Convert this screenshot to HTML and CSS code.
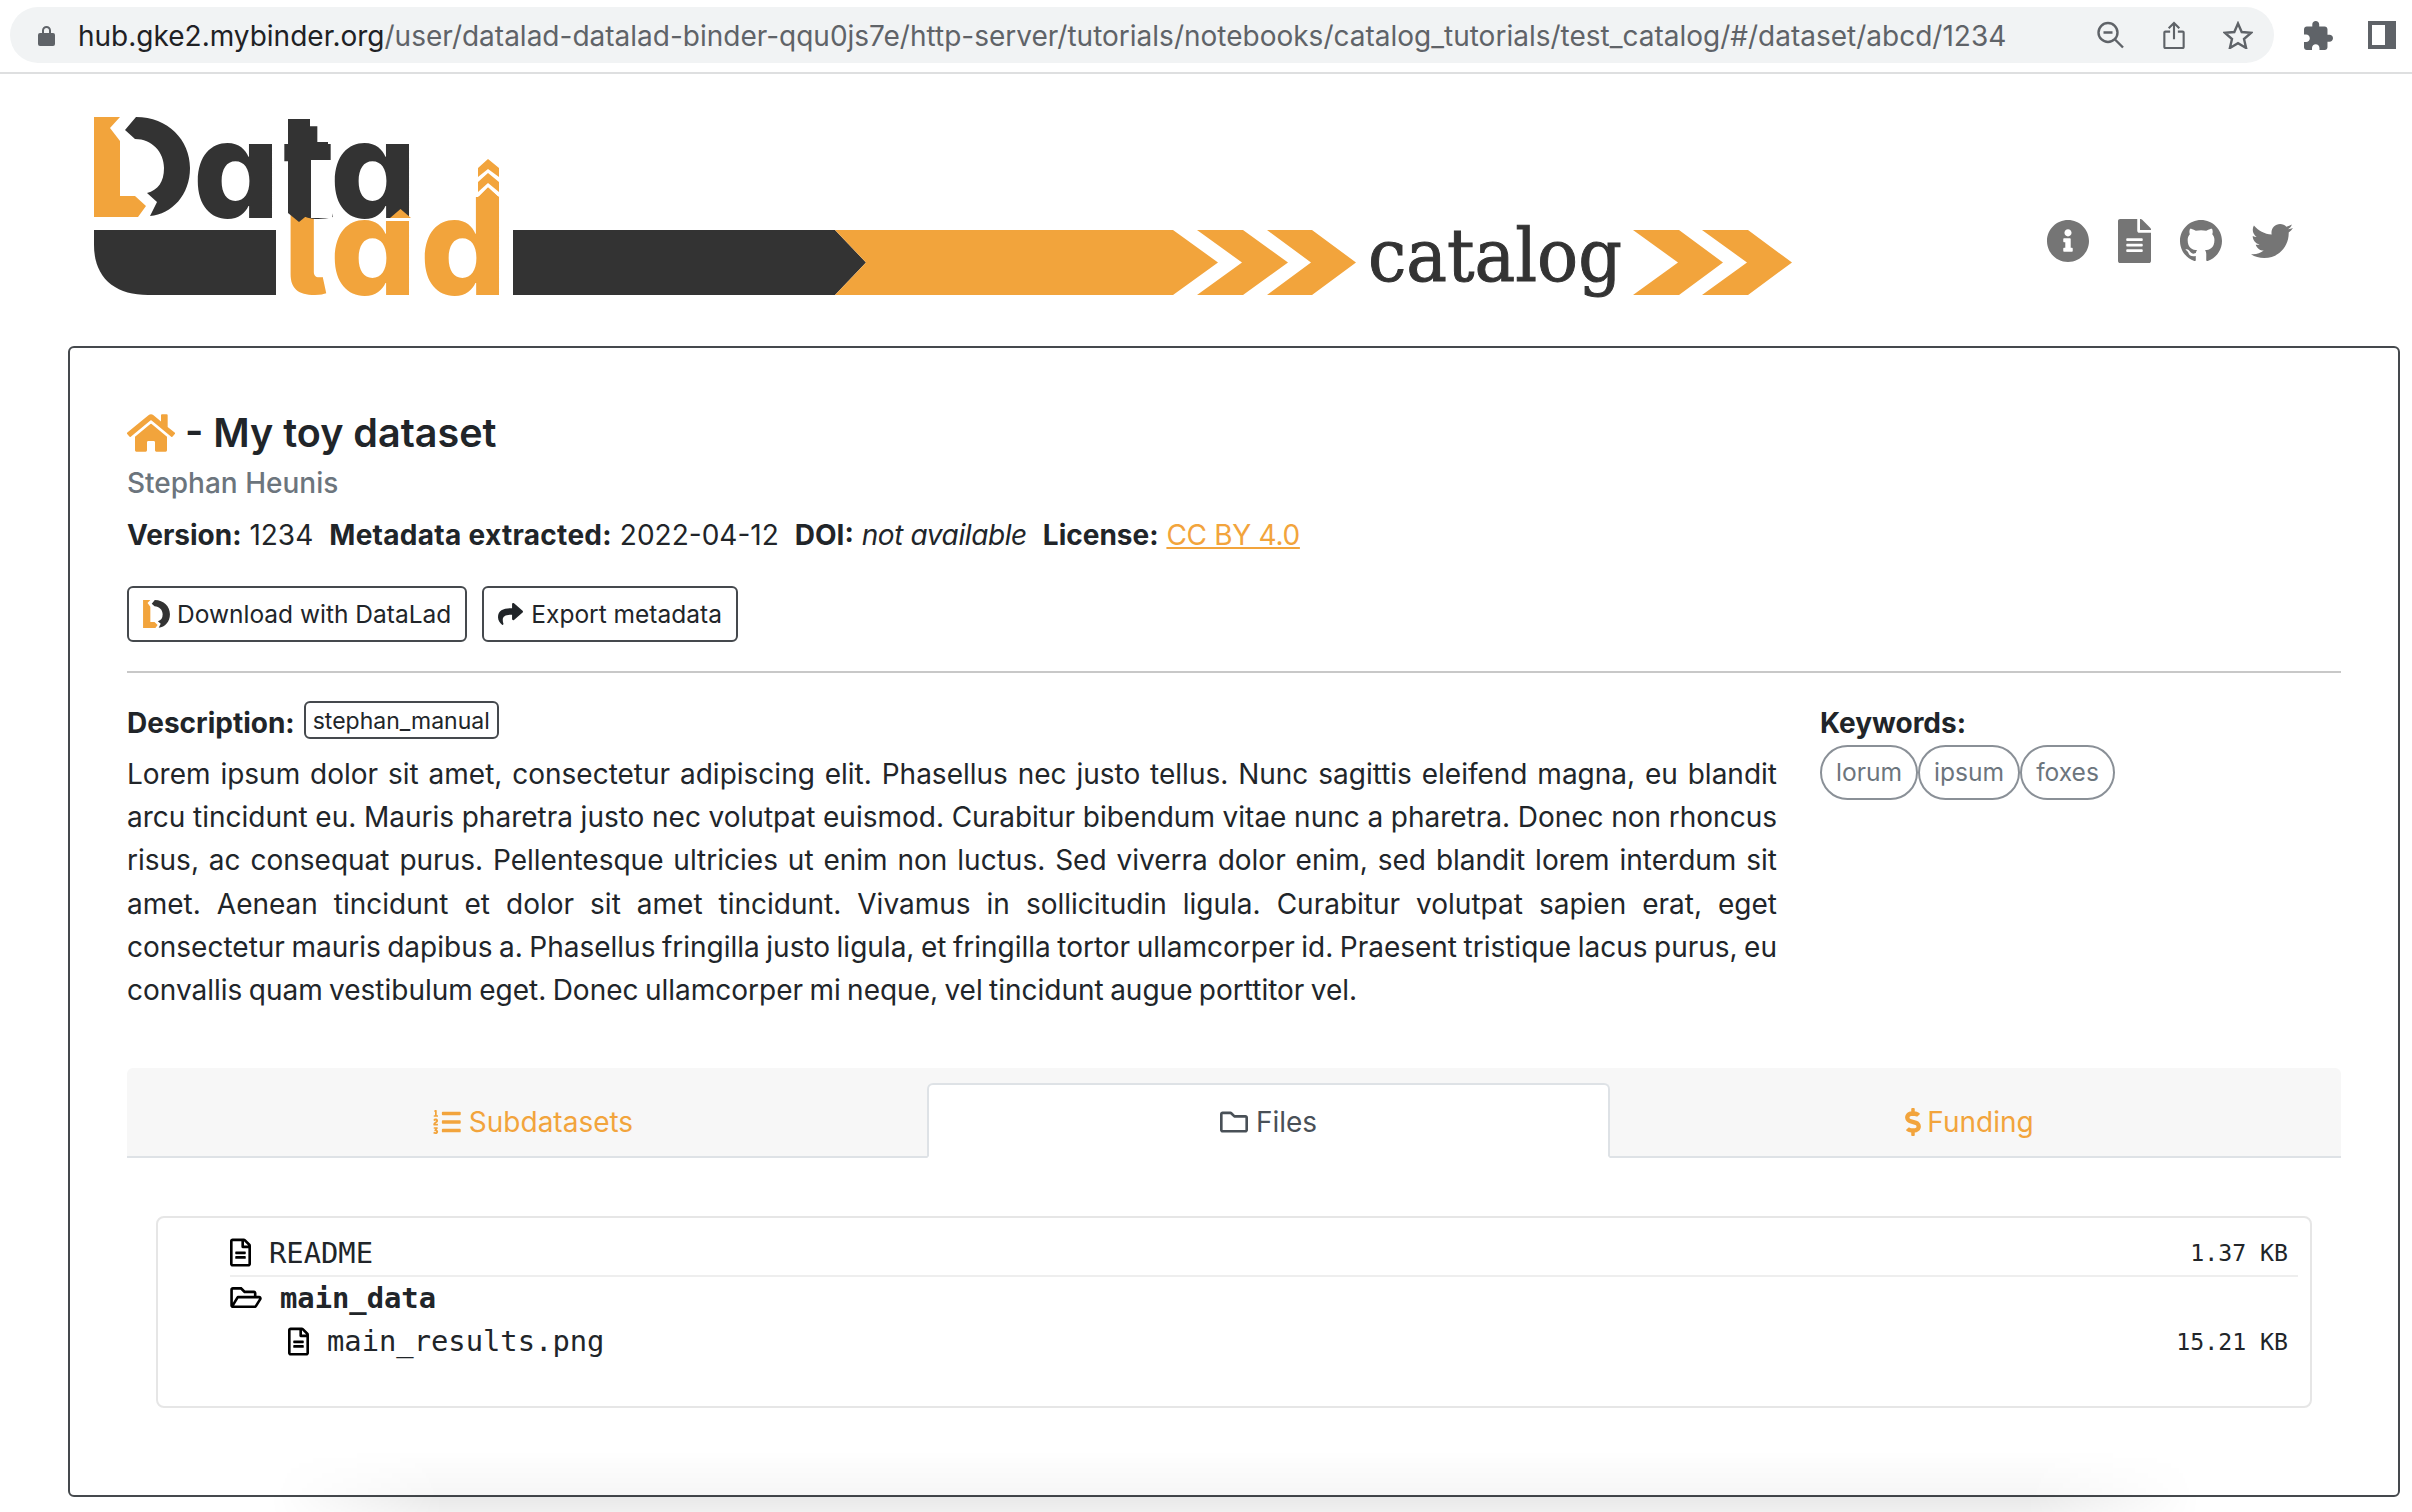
FILE: index.html
```html
<!DOCTYPE html>
<html lang="en">
<head>
    <meta charset="UTF-8">
    <meta name="viewport" content="width=device-width, initial-scale=1.0">
    <title>DataLad Catalog - My toy dataset</title>
    <link rel="stylesheet" href="styles.css">
</head>
<body>
    <svg class="defs" width="0" height="0">
        <symbol id="dl-mark" viewBox="94 117 96 100">
            <polygon fill="#f2a43c" points="94,117 120,117 110,128 120,141 120,196 135,196 146,206 138,217 94,217"/>
            <path fill="#333" d="M136 117C168 117 190 140 190 168C190 195 172 214 150 216L157 202L147 193C158 190 164 182 164 168C164 152 152 139 135 139L125 130Z"/>
        </symbol>
    </svg>

    <div class="browser-bar">
        <div class="address">
            <svg class="lock" viewBox="0 0 17 21"><path fill="#5f6368" d="M4 8V5.5a4.5 4.5 0 0 1 9 0V8h2a2 2 0 0 1 2 2v9a2 2 0 0 1-2 2H2a2 2 0 0 1-2-2v-9a2 2 0 0 1 2-2zm2 0h5V5.5a2.5 2.5 0 0 0-5 0z"/></svg>
            <div class="url"><span class="host">hub.gke2.mybinder.org</span>/user/datalad-datalad-binder-qqu0js7e/http-server/tutorials/notebooks/catalog_tutorials/test_catalog/#/dataset/abcd/1234</div>
            <svg class="bar-icon zoom-icon" viewBox="0 0 27 27"><circle cx="11" cy="11" r="9.5" fill="none" stroke="#5f6368" stroke-width="2.4"/><path d="M6.5 11h9M18 18l8 8" fill="none" stroke="#5f6368" stroke-width="2.4"/></svg>
            <svg class="bar-icon share-icon" viewBox="0 0 22 29"><path d="M7 11H2a1 1 0 0 0-1 1v15a1 1 0 0 0 1 1h18a1 1 0 0 0 1-1V12a1 1 0 0 0-1-1h-5M11 19V2M5.5 7.5L11 2l5.500 5.500" fill="none" stroke="#5f6368" stroke-width="2.2"/></svg>
            <svg class="bar-icon star-icon" viewBox="0 0 30 28"><polygon points="15,2.500 18.700,11 28,11.800 21,18 23.100,27 15,22.200 6.900,27 9,18 2,11.800 11.300,11" fill="none" stroke="#5f6368" stroke-width="2.4"/></svg>
        </div>
        <svg class="puzzle" viewBox="2 1 21 21"><path fill="#5f6368" d="M20.500 11H19V7c0-1.100-.9-2-2-2h-4V3.500C13 2.120 11.880 1 10.500 1S8 2.120 8 3.500V5H4c-1.100 0-1.990.9-1.990 2v3.800H3.500c1.490 0 2.700 1.210 2.700 2.700s-1.210 2.700-2.700 2.700H2V20c0 1.100.9 2 2 2h3.800v-1.500c0-1.490 1.210-2.700 2.700-2.700 1.490 0 2.700 1.210 2.700 2.700V22H17c1.100 0 2-.9 2-2v-4h1.500c1.380 0 2.500-1.120 2.500-2.500S21.880 11 20.500 11z"/></svg>
        <svg class="side-panel" viewBox="0 0 28 28"><path fill="#5f6368" fill-rule="evenodd" d="M0 0h28v28H0zM4 4v20h13V4z"/></svg>
    </div>

    <header class="site-header">
        <svg class="logo" viewBox="94 117 1698 178" role="img" aria-label="DataLad catalog">
            <text class="logo-word lad" x="283 330 420">lad</text>
            <polygon fill="#f2a43c" points="478,197 488,187 499,197 499,230 478,230"/>
            <polygon fill="#fff" points="470,180 488,180 488,187 478,197 470,197"/>
            <polygon fill="#fff" points="488,180 505,180 505,197 499,197 488,187"/>
            <polygon fill="#f2a43c" points="488,159 499,168 499,177 488,169 478,177 478,168"/>
            <polygon fill="#f2a43c" points="488,173 499,182 499,192 488,183 478,192 478,182"/>
            <use href="#dl-mark" x="94" y="117" width="96" height="100"/>
            <rect fill="#fff" x="280" y="160" width="52" height="53"/>
            <text class="logo-word ata" x="193 283 330">ata</text>
            <rect fill="#fff" x="311" y="160" width="21" height="58"/>
            <rect fill="#333" x="288" y="119" width="22" height="94"/>
            <polygon fill="#333" points="288,213 310,213 299,222"/>
            <rect fill="#333" x="310" y="142" width="18" height="16"/>
            <polygon fill="#f2a43c" points="390,218 400.500,209 411,218"/>
            <path fill="#333" d="M94 230H276V295H148C115 295 94 278 94 245Z"/>
            <polygon fill="#333" points="513,230 835,230 866,262.500 835,295 513,295"/>
            <polygon fill="#f2a43c" points="835,230 1173,230 1218,262.500 1173,295 835,295 866,262.500"/>
            <polygon fill="#f2a43c" points="1197,230 1243,230 1288,262.500 1243,295 1197,295 1242,262.500"/>
            <polygon fill="#f2a43c" points="1267,230 1312,230 1356,262.500 1312,295 1267,295 1311,262.500"/>
            <text class="logo-catalog" x="1368" y="281" textLength="254" lengthAdjust="spacingAndGlyphs">catalog</text>
            <polygon fill="#f2a43c" points="1633,230 1679,230 1723,262.500 1679,295 1633,295 1678,262.500"/>
            <polygon fill="#f2a43c" points="1702,230 1748,230 1792,262.500 1748,295 1702,295 1747,262.500"/>
        </svg>
        <nav class="social">
            <svg class="social-icon" viewBox="8 8 496 496"><path d="M256 8C119 8 8 119.083 8 256c0 137 111 248 248 248s248-111 248-248C504 119.083 393 8 256 8zm0 110c23.196 0 42 18.804 42 42s-18.804 42-42 42-42-18.804-42-42 18.804-42 42-42zm56 254c0 6.627-5.373 12-12 12h-88c-6.627 0-12-5.373-12-12v-24c0-6.627 5.373-12 12-12h12v-64h-12c-6.627 0-12-5.373-12-12v-24c0-6.627 5.373-12 12-12h64c6.627 0 12 5.373 12 12v100h12c6.627 0 12 5.373 12 12v24z"/></svg>
            <svg class="social-icon doc" viewBox="0 0 384 512"><path d="M224 136V0H24C10.700 0 0 10.700 0 24v464c0 13.300 10.700 24 24 24h336c13.300 0 24-10.700 24-24V160H248c-13.200 0-24-10.800-24-24zm64 236c0 6.600-5.400 12-12 12H108c-6.600 0-12-5.400-12-12v-8c0-6.600 5.400-12 12-12h168c6.600 0 12 5.400 12 12v8zm0-64c0 6.600-5.400 12-12 12H108c-6.600 0-12-5.400-12-12v-8c0-6.600 5.400-12 12-12h168c6.600 0 12 5.400 12 12v8zm0-72v8c0 6.600-5.400 12-12 12H108c-6.600 0-12-5.400-12-12v-8c0-6.600 5.400-12 12-12h168c6.600 0 12 5.400 12 12zm96-114.100v6.100H256V0h6.100c6.400 0 12.500 2.500 17 7l97.900 98c4.500 4.500 7 10.600 7 16.900z"/></svg>
            <svg class="social-icon" viewBox="0 0 16 16"><path d="M8 0C3.580 0 0 3.580 0 8c0 3.540 2.290 6.530 5.470 7.590.4.070.55-.17.55-.38 0-.19-.01-.82-.01-1.490-2.010.37-2.530-.49-2.690-.94-.09-.23-.48-.94-.82-1.130-.28-.15-.68-.52-.01-.53.63-.01 1.080.58 1.230.82.72 1.210 1.870.87 2.330.66.07-.52.28-.87.51-1.070-1.780-.2-3.640-.89-3.640-3.950 0-.87.31-1.590.82-2.150-.08-.2-.36-1.020.08-2.120 0 0 .67-.21 2.200.82.64-.18 1.320-.27 2-.27.68 0 1.360.09 2 .27 1.530-1.040 2.200-.82 2.200-.82.44 1.100.16 1.920.08 2.120.51.56.82 1.270.82 2.150 0 3.070-1.870 3.750-3.650 3.950.29.25.54.73.54 1.480 0 1.070-.01 1.930-.01 2.200 0 .21.15.46.55.38A8.013 8.013 0 0016 8c0-4.420-3.580-8-8-8z"/></svg>
            <svg class="social-icon" viewBox="0 48 512 416"><path d="M459.370 151.716c.325 4.548.325 9.097.325 13.645 0 138.720-105.583 298.558-298.558 298.558-59.452 0-114.680-17.219-161.137-47.106 8.447.974 16.568 1.299 25.340 1.299 49.055 0 94.213-16.568 130.274-44.832-46.132-.975-84.792-31.188-98.112-72.772 6.498.974 12.995 1.624 19.818 1.624 9.421 0 18.843-1.300 27.614-3.573-48.081-9.747-84.143-51.980-84.143-102.985v-1.299c13.969 7.797 30.214 12.670 47.431 13.319-28.264-18.843-46.781-51.005-46.781-87.391 0-19.492 5.197-37.360 14.294-52.954 51.655 63.675 129.300 105.258 216.365 109.807-1.624-7.797-2.599-15.918-2.599-24.040 0-57.828 46.782-104.934 104.934-104.934 30.213 0 57.502 12.670 76.670 33.137 23.715-4.548 46.456-13.320 66.599-25.340-7.798 24.366-24.366 44.833-46.132 57.827 21.117-2.273 41.584-8.122 60.426-16.243-14.292 20.791-32.161 39.308-52.628 54.253z"/></svg>
        </nav>
    </header>

    <main class="card">
        <h1 class="title">
            <svg class="home-icon" viewBox="0 32 576 448"><path d="M280.370 148.260L96 300.110V464a16 16 0 0 0 16 16l112.060-.29a16 16 0 0 0 15.920-16V368a16 16 0 0 1 16-16h64a16 16 0 0 1 16 16v95.640a16 16 0 0 0 16 16.050L464 480a16 16 0 0 0 16-16V300L295.670 148.260a12.190 12.190 0 0 0-15.300 0zM571.600 251.470L488 182.560V44.050a12 12 0 0 0-12-12h-56a12 12 0 0 0-12 12v72.610L318.470 43a48 48 0 0 0-61 0L4.340 251.470a12 12 0 0 0-1.600 16.900l25.500 31A12 12 0 0 0 45.150 301l235.220-193.740a12.190 12.190 0 0 1 15.300 0L530.900 301a12 12 0 0 0 16.900-1.600l25.500-31a12 12 0 0 0-1.700-16.930z"/></svg>
            <span>- My toy dataset</span>
        </h1>
        <div class="author">Stephan Heunis</div>
        <div class="meta">
            <span><b>Version:</b> 1234</span>
            <span><b class="wide">Metadata extracted:</b> 2022-04-12</span>
            <span><b>DOI:</b> <em>not available</em></span>
            <span><b>License:</b> <a href="#">CC BY 4.0</a></span>
        </div>
        <div class="actions">
            <button class="btn"><svg class="btn-mark"><use href="#dl-mark"/></svg>Download with DataLad</button>
            <button class="btn"><svg class="btn-share" viewBox="0 32 512 448"><path d="M503.691 189.836L327.687 37.851C312.281 24.546 288 35.347 288 56.015v80.053C127.371 137.907 0 170.100 0 322.326c0 61.441 39.581 122.309 83.333 154.132 13.653 9.931 33.111-2.533 28.077-18.631C66.066 312.814 132.917 274.316 288 272.085V360c0 20.700 24.300 31.453 39.687 18.164l176.004-152c11.071-9.562 11.086-26.753 0-36.328z"/></svg>Export metadata</button>
        </div>
        <hr class="rule">
        <section class="details">
            <div class="description">
                <div class="desc-head"><b>Description:</b><span class="source-tag">stephan_manual</span></div>
                <p>Lorem ipsum dolor sit amet, consectetur adipiscing elit. Phasellus nec justo tellus. Nunc sagittis eleifend magna, eu blandit arcu tincidunt eu. Mauris pharetra justo nec volutpat euismod. Curabitur bibendum vitae nunc a pharetra. Donec non rhoncus risus, ac consequat purus. Pellentesque ultricies ut enim non luctus. Sed viverra dolor enim, sed blandit lorem interdum sit amet. Aenean tincidunt et dolor sit amet tincidunt. Vivamus in sollicitudin ligula. Curabitur volutpat sapien erat, eget consectetur mauris dapibus a. Phasellus fringilla justo ligula, et fringilla tortor ullamcorper id. Praesent tristique lacus purus, eu convallis quam vestibulum eget. Donec ullamcorper mi neque, vel tincidunt augue porttitor vel.</p>
            </div>
            <aside class="keywords">
                <b>Keywords:</b>
                <div class="pills">
                    <span class="pill">lorum</span>
                    <span class="pill">ipsum</span>
                    <span class="pill">foxes</span>
                </div>
            </aside>
        </section>
        <div class="tabs">
            <a class="tab" href="#"><svg class="tab-icon" viewBox="0 32 512 448"><path d="M61.770 401l17.500-20.150a19.920 19.920 0 0 0 5.070-14.190v-3.310C84.340 356 80.500 352 73 352H16a8 8 0 0 0-8 8v16a8 8 0 0 0 8 8h22.830a157.410 157.410 0 0 0-11 12.310l-5.610 7c-4 5.070-5.250 10.130-2.800 14.880l1.050 1.930c3 5.760 6.290 7.880 12.250 7.880h4.730c10.330 0 15.940 2.440 15.940 9.090 0 4.720-4.200 8.220-14.360 8.220a41.540 41.540 0 0 1-15.470-3.120c-6.490-3.880-11.740-3.500-15.600 3.120l-5.590 9.310c-3.720 6.130-3.190 11.720 2.630 15.940 7.710 4.690 20.380 9.440 37 9.440 34.160 0 48.500-22.750 48.500-44.120-.03-14.380-9.120-29.760-28.730-34.880zM496 224H176a16 16 0 0 0-16 16v32a16 16 0 0 0 16 16h320a16 16 0 0 0 16-16v-32a16 16 0 0 0-16-16zm0-160H176a16 16 0 0 0-16 16v32a16 16 0 0 0 16 16h320a16 16 0 0 0 16-16V80a16 16 0 0 0-16-16zm0 320H176a16 16 0 0 0-16 16v32a16 16 0 0 0 16 16h320a16 16 0 0 0 16-16v-32a16 16 0 0 0-16-16zM16 160h64a8 8 0 0 0 8-8v-16a8 8 0 0 0-8-8H64V40a8 8 0 0 0-8-8H32a8 8 0 0 0-7.140 4.420l-8 16A8 8 0 0 0 24 64h8v64H16a8 8 0 0 0-8 8v16a8 8 0 0 0 8 8zm-3.910 160H80a8 8 0 0 0 8-8v-16a8 8 0 0 0-8-8H41.320c3.290-10.290 48.340-18.680 48.340-56.440 0-29.060-25-39.560-44.470-39.560-21.360 0-33.800 10-40.460 18.750-4.370 5.590-3 10.840 2.800 15.370l8.580 6.880c5.610 4.560 11 2.470 16.120-2.440a13.440 13.440 0 0 1 9.460-3.840c3.330 0 9.280 1.560 9.280 8.750C51 248.190 0 257.310 0 304.590v4C0 316 5.080 320 12.090 320z"/></svg>Subdatasets</a>
            <a class="tab active" href="#"><svg class="tab-icon" viewBox="0 64 512 384"><path d="M464 128H272l-54.630-54.630c-6-6-14.140-9.370-22.630-9.370H48C21.490 64 0 85.490 0 112v288c0 26.510 21.490 48 48 48h416c26.510 0 48-21.490 48-48V176c0-26.510-21.490-48-48-48zm0 272H48V112h140.120l54.630 54.630c6 6 14.140 9.370 22.630 9.370H464v224z"/></svg>Files</a>
            <a class="tab" href="#"><svg class="tab-icon dollar" viewBox="0 0 288 512"><path d="M209.200 233.400l-108-31.600C88.700 198.200 80 186.500 80 173.500c0-16.300 13.200-29.500 29.500-29.500h66.300c12.200 0 24.200 3.700 34.200 10.500 6.100 4.100 14.300 3.100 19.500-2l34.800-34c7.100-6.900 6.100-18.400-1.800-24.500C238 74.800 207.400 64.100 176 64V16c0-8.800-7.200-16-16-16h-32c-8.800 0-16 7.200-16 16v48h-2.500C45.800 64-5.400 118.700.5 183.600c4.200 46.100 39.400 83.600 83.800 96.600l102.500 30c12.500 3.700 21.200 15.300 21.200 28.300 0 16.300-13.200 29.500-29.500 29.500h-66.300C100 368 88 364.300 78 357.500c-6.100-4.100-14.300-3.100-19.500 2l-34.800 34c-7.100 6.900-6.100 18.400 1.800 24.500 24.500 19.200 55.100 29.900 86.500 30v48c0 8.800 7.200 16 16 16h32c8.800 0 16-7.200 16-16v-48.200c46.600-.9 90.300-28.600 105.700-72.700 21.500-61.600-14.600-124.800-72.500-141.700z"/></svg>Funding</a>
        </div>
        <div class="files">
            <div class="file-row first">
                <svg class="file-icon" viewBox="0 0 384 512"><path d="M288 248v28c0 6.600-5.400 12-12 12H108c-6.600 0-12-5.400-12-12v-28c0-6.600 5.400-12 12-12h168c6.600 0 12 5.400 12 12zm-12 72H108c-6.600 0-12 5.400-12 12v28c0 6.600 5.400 12 12 12h168c6.600 0 12-5.400 12-12v-28c0-6.600-5.400-12-12-12zm108-188.100V464c0 26.500-21.500 48-48 48H48c-26.500 0-48-21.500-48-48V48C0 21.500 21.500 0 48 0h204.100C264.800 0 277 5.100 286 14.100L369.900 98c9 8.900 14.100 21.200 14.100 33.900zm-128-80V128h76.100L256 51.900zM336 464V176H232c-13.300 0-24-10.700-24-24V48H48v416h288z"/></svg>
                <span class="file-name">README</span>
                <span class="file-size">1.37 KB</span>
            </div>
            <div class="file-row folder">
                <svg class="folder-icon" viewBox="0 64 576 384"><path d="M527.900 224H480v-48c0-26.500-21.500-48-48-48H272l-64-64H48C21.500 64 0 85.500 0 112v288c0 26.500 21.500 48 48 48h400c16.500 0 31.900-8.500 40.700-22.600l79.900-128c20-31.900-3-73.400-40.700-73.400zM48 118c0-3.300 2.700-6 6-6h134.100l64 64H426c3.300 0 6 2.700 6 6v42H152c-16.800 0-32.400 8.800-41.100 23.200L48 351.400zm400 282H72l77.200-128H528z"/></svg>
                <span class="file-name folder-name">main_data</span>
            </div>
            <div class="file-row child">
                <svg class="file-icon" viewBox="0 0 384 512"><path d="M288 248v28c0 6.600-5.400 12-12 12H108c-6.600 0-12-5.400-12-12v-28c0-6.600 5.400-12 12-12h168c6.600 0 12 5.400 12 12zm-12 72H108c-6.600 0-12 5.400-12 12v28c0 6.600 5.400 12 12 12h168c6.600 0 12-5.400 12-12v-28c0-6.600-5.400-12-12-12zm108-188.100V464c0 26.500-21.500 48-48 48H48c-26.500 0-48-21.500-48-48V48C0 21.500 21.500 0 48 0h204.100C264.800 0 277 5.100 286 14.100L369.900 98c9 8.900 14.100 21.200 14.100 33.900zm-128-80V128h76.100L256 51.900zM336 464V176H232c-13.300 0-24-10.700-24-24V48H48v416h288z"/></svg>
                <span class="file-name">main_results.png</span>
                <span class="file-size">15.21 KB</span>
            </div>
        </div>
    </main>
    <div class="window-shade"></div>
</body>
</html>
```

FILE: styles.css
```css
* {
    box-sizing: border-box;
    margin: 0;
    padding: 0;
}
html, body {
    height: 1512px;
    overflow: hidden;
}
body {
    position: relative;
    font-family: Inter, "Liberation Sans", sans-serif;
    font-size: 28px;
    color: #212529;
    background-color: #fff;
}
a {
    color: #f2a43c;
}
b {
    font-weight: 700;
}
svg {
    flex: none;
}
.defs {
    position: absolute;
}

/* browser chrome */
.browser-bar {
    display: flex;
    align-items: center;
    height: 74px;
    padding: 8px 16px 10px 10px;
    border-bottom: 2px solid #dedfe0;
}
.address {
    display: flex;
    align-items: center;
    width: 2264px;
    height: 56px;
    padding: 0 21px 0 28px;
    background-color: #f1f3f4;
    border-radius: 28px;
}
.lock {
    width: 17px;
    height: 21px;
    margin-right: 23px;
}
.url {
    flex: 1;
    padding-top: 1px;
    font-size: 28px;
    line-height: 56px;
    color: #5f6368;
    white-space: nowrap;
}
.host {
    color: #202124;
}
.bar-icon {
    height: 28px;
}
.zoom-icon {
    width: 27px;
}
.share-icon {
    width: 22px;
    margin-left: 39px;
}
.star-icon {
    width: 30px;
    margin-left: 38px;
}
.puzzle {
    width: 29px;
    height: 29px;
    margin-left: 30px;
}
.side-panel {
    width: 28px;
    height: 28px;
    margin-left: 35px;
}

/* logo header */
.site-header {
    display: flex;
    height: 272px;
    padding: 43px 0 0 94px;
}
.logo {
    width: 1698px;
    height: 178px;
    overflow: visible;
}
.logo-word {
    font-family: Inter, sans-serif;
    font-size: 136px;
    font-weight: 800;
    font-feature-settings: "cv05", "cv11";
}
.lad {
    fill: #f2a43c;
    transform: translateY(295px);
}
.ata {
    fill: #333;
    transform: translateY(218px);
}
.logo-catalog {
    font-family: "DejaVu Serif", serif;
    font-size: 72px;
    fill: #333;
    stroke: #333;
    stroke-width: 1px;
}
.social {
    display: flex;
    align-items: center;
    gap: 29px;
    height: 44px;
    margin: 102px 0 0 255px;
}
.social-icon {
    width: 42px;
    height: 42px;
    fill: #757575;
}
.social-icon.doc {
    width: 33px;
    height: 44px;
}

/* card */
.card {
    width: 2332px;
    height: 1151px;
    margin-left: 68px;
    padding: 61px 57px 0;
    border: 2px solid #45494d;
    border-radius: 6px;
}
.title {
    display: flex;
    align-items: center;
    gap: 10px;
    font-size: 39.5px;
    font-weight: 600;
    line-height: 48px;
}
.home-icon {
    width: 48px;
    height: 38px;
    fill: #f2a43c;
}
.author {
    margin-top: 8px;
    font-weight: 500;
    line-height: 36px;
    color: #6c757d;
}
.meta {
    display: flex;
    gap: 16px;
    margin-top: 14px;
    line-height: 40px;
}
.meta .wide {
    letter-spacing: 0.3px;
}
.meta em {
    letter-spacing: -0.4px;
}
.meta a {
    letter-spacing: -0.3px;
}
.actions {
    display: flex;
    gap: 15px;
    margin-top: 31px;
}
.btn {
    display: flex;
    align-items: center;
    height: 56px;
    padding: 0 14px;
    font-family: inherit;
    font-size: 24.5px;
    color: #212529;
    background-color: #fff;
    border: 2px solid #45494d;
    border-radius: 6px;
}
.btn-mark {
    width: 27px;
    height: 28px;
    margin-right: 7px;
}
.btn-share {
    width: 25px;
    height: 22px;
    margin-right: 8px;
    fill: #212529;
}
.rule {
    height: 2px;
    margin-top: 29px;
    background-color: #c8c8c8;
    border: 0;
}
.details {
    display: flex;
    gap: 43px;
    margin-top: 28px;
}
.description {
    width: 1650px;
}
.desc-head {
    display: flex;
    align-items: center;
    gap: 9px;
    height: 38px;
}
.desc-head b {
    padding-top: 6px;
}
.source-tag {
    height: 38px;
    padding: 0 7px;
    font-size: 23px;
    line-height: 36px;
    border: 2px solid #45494d;
    border-radius: 6px;
}
.description p {
    margin-top: 14px;
    line-height: 43.2px;
    word-spacing: -1.5px;
    text-align: justify;
}
.keywords {
    line-height: 44px;
}
.pills {
    display: flex;
}
.pill {
    height: 55px;
    padding: 0 14px;
    font-size: 24.6px;
    line-height: 51px;
    color: #6c757d;
    border: 2px solid #8a9097;
    border-radius: 28px;
}

/* tabs */
.tabs {
    display: grid;
    grid-template-columns: 800px 683px 1fr;
    align-items: end;
    height: 90px;
    margin-top: 56px;
    background-color: #f7f7f7;
    border-bottom: 2px solid #dee2e6;
    border-radius: 6px 6px 0 0;
}
.tab {
    display: flex;
    align-items: center;
    justify-content: center;
    gap: 6px;
    height: 75px;
    margin-bottom: -2px;
    padding-top: 2px;
    text-decoration: none;
    border: 2px solid transparent;
    border-bottom-width: 2px;
    border-radius: 6px 6px 0 0;
    fill: #f2a43c;
}
.tab:first-child {
    padding-left: 12px;
}
.tab:last-child {
    padding-right: 12px;
}
.tab.active {
    color: #495057;
    fill: #495057;
    background-color: #fff;
    border-color: #dee2e6 #dee2e6 #fff;
}
.tab-icon {
    width: 28px;
    height: 24px;
    margin-right: 2px;
}
.tab-icon.dollar {
    width: 16px;
    height: 28px;
    margin-right: 0;
}

/* file tree */
.files {
    height: 192px;
    margin: 58px 29px 0;
    padding: 15px 12px 0 72px;
    border: 2px solid #e6e6e6;
    border-radius: 8px;
}
.file-row {
    display: flex;
    align-items: center;
    height: 44px;
    font-family: "DejaVu Sans Mono", monospace;
    font-size: 28.8px;
}
.file-row.first {
    padding-bottom: 3px;
    border-bottom: 2px solid #eee;
}
.file-row.folder {
    height: 43px;
    margin-top: -1px;
}
.file-row.child {
    padding-left: 58px;
}
.file-icon {
    width: 21px;
    height: 29px;
    margin-right: 18px;
}
.folder-icon {
    width: 32px;
    height: 21px;
    margin-right: 18px;
}
.folder-name {
    font-weight: 700;
}
.file-size {
    margin: 0 10px 0 auto;
    font-size: 23.2px;
}

/* window shadow along the bottom of the screenshot */
.window-shade {
    position: absolute;
    left: 270px;
    top: 1450px;
    width: 1930px;
    height: 62px;
    pointer-events: none;
    background: linear-gradient(to bottom, rgba(0, 0, 0, 0), rgba(0, 0, 0, 0.035) 74%, rgba(0, 0, 0, 0.09) 75%, rgba(0, 0, 0, 0.06));
    -webkit-mask-image: linear-gradient(to right, transparent, #000 9%, #000 91%, transparent);
    mask-image: linear-gradient(to right, transparent, #000 9%, #000 91%, transparent);
}
```
